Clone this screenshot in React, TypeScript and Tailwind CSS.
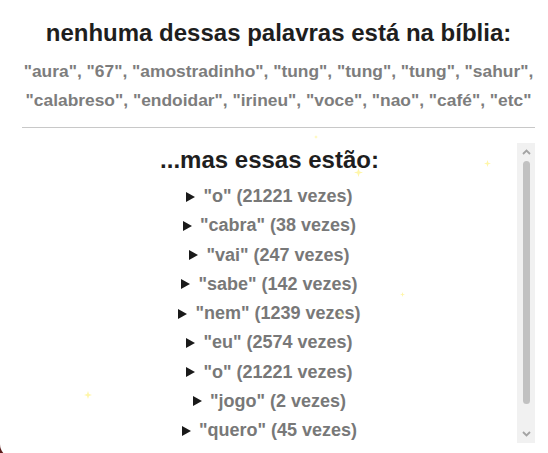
import React from "react";

const missing = [
  ['"aura"', '"67"', '"amostradinho"', '"tung"', '"tung"', '"tung"', '"sahur"'],
  ['"calabreso"', '"endoidar"', '"irineu"', '"voce"', '"nao"', '"café"', '"etc"'],
];

const found = [
  { word: "o", count: 21221 },
  { word: "cabra", count: 38 },
  { word: "vai", count: 247 },
  { word: "sabe", count: 142 },
  { word: "nem", count: 1239 },
  { word: "eu", count: 2574 },
  { word: "o", count: 21221 },
  { word: "jogo", count: 2 },
  { word: "quero", count: 45 },
];

// little glitter dots floating over the card
const sparkles = [
  { x: 354, y: 168, s: 9 },
  { x: 484, y: 160, s: 7 },
  { x: 400, y: 292, s: 5 },
  { x: 338, y: 311, s: 6 },
  { x: 84, y: 391, s: 8 },
  { x: 314, y: 135, s: 4 },
];

const Sparkle = ({ s }: { s: number }) => (
  <svg width={s} height={s} viewBox="0 0 10 10">
    <path d="M5 0 L6.2 3.8 L10 5 L6.2 6.2 L5 10 L3.8 6.2 L0 5 L3.8 3.8 Z" fill="#fff6a8" />
  </svg>
);

const Chevron = ({ up }: { up?: boolean }) => (
  <svg width="9" height="6" viewBox="0 0 9 6">
    <path
      d={up ? "M1 5 L4.5 1.5 L8 5" : "M1 1 L4.5 4.5 L8 1"}
      stroke="#a3a3a3"
      strokeWidth="1.8"
      fill="none"
    />
  </svg>
);

export default function App() {
  return (
    <div className="h-[453px] overflow-hidden bg-[#5b1c1c] font-['Liberation_Sans',Arial,sans-serif]">
      <div className="-mt-[20px] h-[478px] rounded-bl-[14px] bg-white pt-[20px]">
        <div className="relative h-full pl-[22px] pr-[13px]">
          {sparkles.map((p, i) => (
            <div key={i} className="pointer-events-none absolute z-10" style={{ left: p.x, top: p.y }}>
              <Sparkle s={p.s} />
            </div>
          ))}

          <h1 className="pt-[19px] text-center text-[24px] font-bold leading-[28px] text-[#1e1e1e]">
            nenhuma dessas palavras está na bíblia:
          </h1>

          <div className="mt-[10px] text-center text-[17.4px] font-bold leading-[29px] text-[#7d7d7d]">
            {missing.map((line, i) => (
              <p key={i} className="whitespace-nowrap">
                {line.join(", ")}
                {i === 0 ? "," : ""}
              </p>
            ))}
          </div>

          <div className="mt-[12px] h-px bg-[#c8c8c8]" />

          <div className="mt-[15px] flex h-[300px]">
            <div className="flex-1 overflow-hidden pt-[3px] text-center">
              <h2 className="text-[24px] font-bold leading-[28px] text-[#1e1e1e]">...mas essas estão:</h2>
              <div className="mt-[8px]">
                {found.map((f, i) => (
                  <details key={i}>
                    <summary className="flex list-none items-center justify-center gap-[8px] text-[18px] font-bold leading-[29.25px] text-[#787878] [&::-webkit-details-marker]:hidden">
                      <svg width="9" height="10" viewBox="0 0 9 10">
                        <path d="M0 0 L9 5 L0 10 Z" fill="#1a1a1a" />
                      </svg>
                      <span>
                        "{f.word}" ({f.count} vezes)
                      </span>
                    </summary>
                  </details>
                ))}
              </div>
            </div>

            <div className="flex w-[18px] flex-col items-center bg-[#f1f1f1]">
              <div className="flex h-[18px] items-center justify-center">
                <Chevron up />
              </div>
              <div className="h-[243px] w-[7px] rounded-full bg-[#c1c1c1]" />
              <div className="flex-1" />
              <div className="flex h-[18px] items-center justify-center">
                <Chevron />
              </div>
            </div>
          </div>
        </div>
      </div>
    </div>
  );
}
